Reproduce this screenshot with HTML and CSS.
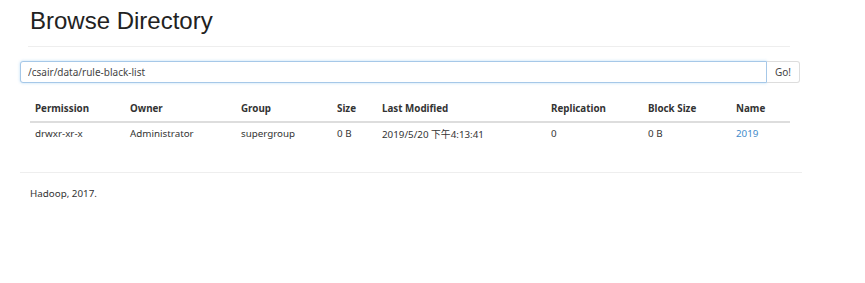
FILE: index.html
```html
<!DOCTYPE html>
<html lang="en">
<head>
    <meta charset="UTF-8">
    <title>Browsing HDFS</title>
    <link rel="stylesheet" href="styles.css">
</head>
<body>
    <div class="container">
        <div class="page-header">
            <h1 class="title">Browse Directory</h1>
        </div>

        <div class="path-bar">
            <input type="text" class="path-input" value="/csair/data/rule-black-list">
            <button type="button" class="go-btn">Go!</button>
        </div>

        <div class="listing">
            <div class="row head">
                <div class="cell">Permission</div>
                <div class="cell">Owner</div>
                <div class="cell">Group</div>
                <div class="cell">Size</div>
                <div class="cell">Last Modified</div>
                <div class="cell">Replication</div>
                <div class="cell">Block Size</div>
                <div class="cell">Name</div>
            </div>
            <div class="row">
                <div class="cell">drwxr-xr-x</div>
                <div class="cell">Administrator</div>
                <div class="cell">supergroup</div>
                <div class="cell">0 B</div>
                <div class="cell">2019/5/20 下午4:13:41</div>
                <div class="cell">0</div>
                <div class="cell">0 B</div>
                <div class="cell"><a href="#" class="dir-link">2019</a></div>
            </div>
        </div>

        <div class="footer">
            <p>Hadoop, 2017.</p>
        </div>
    </div>
</body>
</html>
```

FILE: styles.css
```css
* {
    margin: 0;
    padding: 0;
    box-sizing: border-box;
}

body {
    font-family: "Noto Sans", "Noto Sans CJK SC", sans-serif;
    font-size: 9.8px;
    color: #333;
    background-color: white;
}

.container {
    width: 780px;
    margin-left: 20px;
}

.page-header {
    margin: 0 10px 0 8px;
    padding: 7px 0 12px 2px;
    border-bottom: 1px solid #eee;
}

.title {
    font-family: "Liberation Sans", Arial, sans-serif;
    font-size: 24px;
    font-weight: normal;
    line-height: 27px;
    color: #222;
}

.path-bar {
    display: flex;
    margin-top: 14px;
    height: 22px;
}

.path-input {
    flex: 1;
    border: 1px solid #a6c8e8;
    border-radius: 3px 0 0 3px;
    box-shadow: 0 0 3px rgba(102, 175, 233, 0.45);
    padding: 0 7px;
    font-family: "Noto Sans", sans-serif;
    font-size: 10px;
    color: #444;
    outline: none;
}

.go-btn {
    width: 33px;
    border: 1px solid #ddd;
    border-left: none;
    border-radius: 0 3px 3px 0;
    background-color: white;
    font-family: "Noto Sans", sans-serif;
    font-size: 10px;
    color: #444;
}

.listing {
    margin: 15px 10px 0 10px;
}

.row {
    display: grid;
    grid-template-columns: 95px 111px 96px 45px 169px 97px 88px 59px;
    align-items: center;
    height: 21px;
}

.row.head {
    height: 25px;
    padding-bottom: 3px;
    border-bottom: 2px solid #ddd;
    font-weight: bold;
    color: #333;
}

.cell {
    padding-left: 5px;
    white-space: nowrap;
}

.dir-link {
    color: #428bca;
    text-decoration: none;
}

.footer {
    margin-top: 28px;
    border-top: 1px solid #eee;
    padding: 14px 10px 12px;
    width: 782px;
}
```
